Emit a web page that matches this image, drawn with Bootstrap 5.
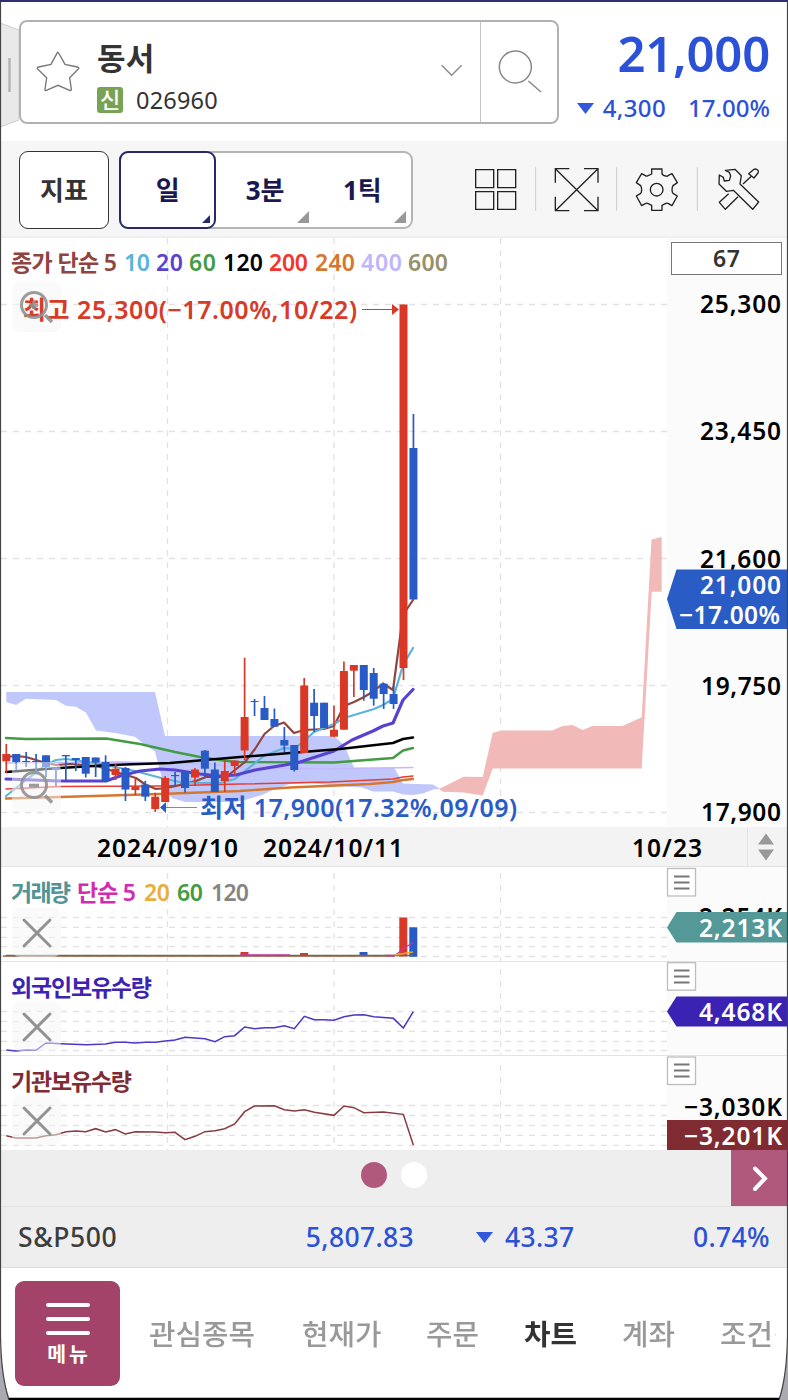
<!DOCTYPE html>
<html lang="ko">
<head>
<meta charset="utf-8">
<meta name="viewport" content="width=device-width, initial-scale=1">
<title>동서 차트</title>
<link href="https://cdn.jsdelivr.net/npm/bootstrap@5.3.0/dist/css/bootstrap.min.css" rel="stylesheet">
<style>
body{font-family:"Noto Sans","Noto Sans CJK KR",sans-serif;background:#fff;color:#333;line-height:1}
svg{display:block;flex:none}
svg text{font-family:"Noto Sans","Noto Sans CJK KR",sans-serif;font-weight:600}
.app{width:788px;height:1400px;border-top:2px solid #30306e;overflow:hidden}
.topbar{height:139px;padding:18px 18px 0 0}
.handle{width:19px;height:106px;margin-top:2px}
.stockbox{width:540px;height:104px;border:2px solid #b2b2b2;border-radius:8px;background:#fff}
.stockname{font-size:31px;font-weight:700;letter-spacing:.2px;line-height:34px}
.tagbox{width:26px;height:26px;border-radius:3px;background:#78a355;color:#fff;font-size:22px;font-weight:500;line-height:25px}
.code{font-size:23.5px;letter-spacing:.2px;line-height:26px;margin-left:13px}
.searchcell{width:77px;border-left:1px solid #c4c4c4}
.blue{color:#2b51d8}
.price{font-size:49px;font-weight:600;line-height:48px;letter-spacing:-.2px;margin-top:9px}
.diff{font-size:24px;font-weight:500;line-height:26px;margin-top:18px}
.toolbar{height:97px;background:#f6f6f6;padding:10px 0 0 19px;border-bottom:2px solid #efefef}
.tbtn{height:78px;border-radius:9px;background:#fff;font-size:26px;font-weight:700;color:#1b1850}
.ind{width:90px;border:1.5px solid #333;color:#333;margin-right:10px}
.period{width:294px;border:2px solid #b5b5b5}
.period .sel{width:99px;margin:-2px 0 -2px -2px;border:2px solid #28286b;border-radius:9px;height:78px}
.period .cell{position:relative;width:98px}
.corner{position:absolute;right:5px;bottom:4px;width:0;height:0;border-left:12px solid transparent;border-bottom:12px solid #999}
.sel .corner{right:4px;bottom:4px;border-left-width:8px;border-bottom:8px solid #28286b}
.pager{height:56px;background:#eee}
.dotp{width:26px;height:26px;border-radius:50%}
.nextb{width:57px;height:56px;background:#b0597c}
.index{height:62px;background:#eee;border-top:1px solid #e3e3e3;border-bottom:1px solid #ddd;font-size:26.5px;font-weight:500;line-height:30px;letter-spacing:.35px}
.menu{width:105px;height:105px;border-radius:9px;background:#a44369;color:#fff;font-size:20.5px;font-weight:700;letter-spacing:3px}
.mline{width:44px;height:4px;border-radius:2px;background:#fff}
.tabs{font-size:28.8px;font-weight:500;color:#999;white-space:nowrap;line-height:34px;-webkit-mask-image:linear-gradient(90deg,#000 650px,transparent 658px)}
.tabs span{flex:none}
.frame{position:absolute;left:0;top:0;pointer-events:none}
</style>
</head>
<body>
<div class="app position-relative">
<header class="topbar d-flex">
  <svg class="handle" viewBox="0 0 19 106"><path d="M0 1L19 8V98L0 105Z" fill="#e9e9e9" stroke="#ccc"/><path d="M9.500 36V70" stroke="#b5b5b5" stroke-width="2.500"/></svg>
  <div class="stockbox d-flex">
    <svg width="76" height="101" viewBox="63 66 228 303"><path d="M174 157Q176 158 195 193L232 201Q239 203 235 207L209 233 214 268Q214 273 209 271L174 256 139 271Q134 273 135 268L140 233 113 207Q109 203 116 201L153 193 172 158Q173 156 174 157Z" fill="none" stroke="#777" stroke-width="4"/></svg>
    <div class="flex-grow-1" style="padding-top:19px">
      <div class="stockname">동서</div>
      <div class="d-flex align-items-center" style="margin-top:12px"><span class="tagbox text-center">신</span><span class="code">026960</span></div>
    </div>
    <svg width="60" height="101" viewBox="97 66 180 303"><path d="M162 196L192 226 222 196" fill="none" stroke="#888" stroke-width="4"/></svg>
    <div class="searchcell"><svg width="76" height="101" viewBox="278 66 228 303"><circle cx="381" cy="201" r="48" fill="none" stroke="#888" stroke-width="4.500"/><path d="M420 243L458 276" stroke="#888" stroke-width="4.500"/></svg></div>
  </div>
  <div class="flex-grow-1 text-end blue">
    <div class="price">21,000</div>
    <div class="diff d-flex justify-content-end align-items-center"><svg width="17" height="11" class="me-auto" style="margin-left:18px"><path d="M0 0H17L8.500 11Z" fill="#3059db"/></svg><span style="letter-spacing:.4px">4,300</span><span style="margin-left:22px">17.00%</span></div>
  </div>
</header>
<div class="toolbar d-flex">
  <div class="tbtn ind d-flex align-items-center justify-content-center">지표</div>
  <div class="tbtn period d-flex">
    <div class="cell sel d-flex align-items-center justify-content-center">일<i class="corner"></i></div>
    <div class="cell d-flex align-items-center justify-content-center">3분<i class="corner"></i></div>
    <div class="cell d-flex align-items-center justify-content-center">1틱<i class="corner"></i></div>
  </div>
  <svg width="375" height="79" viewBox="75 453 1125 237" fill="none" stroke="#222" stroke-width="4">
    <path d="M263 509h54v54h-54zM329 509h54v54h-54zM263 575h54v53h-54zM329 575h54v53h-54z"/>
    <path d="M443 502V632M686 502V632M928 502V632" stroke="#ccc" stroke-width="3"/>
    <path d="M502 506L630 632M630 506L502 632M502 548V506H544M588 506H630V548M630 590V632H588M544 632H502V590"/>
    <path d="M791 507H822V522Q826 527 833 528Q838 530 840 527L852 521 868 548 855 557Q852 562 852 569Q852 576 855 580L868 588 852 617 840 610Q835 608 832 611L822 616V631H791V616L781 611Q777 608 772 611L761 617 745 588 758 580Q761 576 761 569Q761 562 758 557L745 548 761 521 772 527Q777 530 782 526L791 522Z" stroke-linejoin="round"/>
    <circle cx="806" cy="569" r="19"/>
    <path d="M1012 511L1041 508 1060 527 1056 552 1112 606 1094 628 1036 571 1015 574 993 552 994 525 1006 532 1009 543 1024 541 1028 528 1024 517ZM1022 581L994 607 1012 628 1050 590M1065 552L1090 529M1082 521L1098 508Q1104 505 1110 511Q1112 515 1110 519L1098 534Z" stroke-linejoin="round"/>
  </svg>
</div>

<svg width="788" height="589" viewBox="0 238 788 589">
  <rect x="667" y="238" width="121" height="589" fill="#fbfbfb"/>
  <path d="M1 304.500H667M1 431.500H667M1 558.500H667M1 685.500H667M1 812.500H667M167.500 238V827M334 238V827M500.500 238V827" stroke="#e2e2e2" stroke-width="1.300" stroke-dasharray="6 6"/>
  <path d="M6.300 692H155L165 736H334L344 745 354 767.500H394L403 783.500 433 784.500 440 789 433 789.500 423 793.500 413 795 403 794.500 393 791.500H373L362 787.500 340 786 310 783 290 784 275 789 262 795 245 800 235 802H185L172 798 165 790 155 751.500 145 745 135 736.700 115 733 96 730.500 86 712.700 76 706.700 66 705.700 56 700 26 698.700 16 705 6.300 702Z" fill="#c0c8fb"/>
  <path d="M439 789L463.500 776.700 482.700 777 492.700 732.700 501.700 730.500H552L562.500 726 572.500 725 582.500 730 592.500 726H622.500L641.700 717.300 651.500 539.500 661.700 537V591.700H651.700L641.700 768.500H492.700L482.700 795.500 463.500 792.500 443 791.700Z" fill="#f2b9b9"/>
  <g fill="none" stroke-linejoin="round" stroke-linecap="round">
    <path d="M6 763L120 762 210 764 245 768 330 769 413 767.500" stroke="#c3b9fb" stroke-width="1.500"/>
    <path d="M6 798.500L60 797 160 794 240 791 290 787.500 370 784 393 782 403 780 413 779" stroke="#d5772f" stroke-width="2.400"/>
    <path d="M6 789L60 786.500 160 786 240 784 330 782 393 779 403 777 413 776" stroke="#e83b31" stroke-width="1.500"/>
    <path d="M6 738L26 739 106 738.500 140 744 175 752 200 757 220 760 235 762 334 762.500 393 758 403 750.500 413 748" stroke="#439b43" stroke-width="2.400"/>
    <path d="M6 757L16 756 26 757 36 760 46 763 56 765 70 764 86 765 100 767 116 772 126 775 136 778 146 785 156 789 166 788 176 786 186 783 196 781 206 777 226 777 235 770 245 762 255 749 264.500 734 274 726 284 722.500 294 733 304 730 324 729 334 726 344 706 354 702 364 697 374 691 383 683.500 393 690 403 615 413 600" stroke="#91443d" stroke-width="2.200"/>
    <path d="M6 796L30 777 46 765 56 760 66 759 80 761 100 764 120 768 135 771 150 775 165 779 180 782 200 783 220 783 235 779 245 771 264 756 284 748 294 749 304 741 314 732 334 724 344 718 364 712 374 709 383 705 393 699 403 665 413 648" stroke="#5ab3dc" stroke-width="2.200"/>
    <path d="M6 779L60 781 106 781 120 776 140 771 160 769 175 770 200 774 220 776 236 775 255 770 285 765 300 762 334 751 352 740 373 731 383 726 393 723 403 700 413 689.500" stroke="#5a42d0" stroke-width="3.200"/>
    <path d="M6 772L60 768 110 765 170 763 240 757 290 753 340 749 393 743 403 739 413 737.500" stroke="#000" stroke-width="2.500"/>
  </g>
  <g id="candles"></g>
  <g fill="#f5f5f5" fill-opacity=".5"><rect x="12" y="282" width="49" height="50" rx="8"/><rect x="12" y="762" width="49" height="50" rx="8"/></g>
  <g font-size="23">
    <text x="11" y="271" fill="#8f4442" textLength="106">종가 단순 5</text><text x="124" y="271" fill="#5ab3dc" textLength="26">10</text><text x="156" y="271" fill="#5a42d0" textLength="27">20</text><text x="189" y="271" fill="#439b43" textLength="27">60</text><text x="223" y="271" fill="#000" textLength="40">120</text><text x="269" y="271" fill="#f0372d" textLength="39">200</text><text x="315" y="271" fill="#d5772f" textLength="40">240</text><text x="361" y="271" fill="#c0b6fc" textLength="41">400</text><text x="408" y="271" fill="#97906a" textLength="40">600</text>
  </g>
  <text x="23" y="319" font-size="25" fill="#d73a26" textLength="334">최고 25,300(−17.00%,10/22)</text>
  <path d="M362 309.500H393" stroke="#d73a26"/><path d="M392 304L399 309.500 392 315Z" fill="#d73a26"/>
  <text x="200" y="817" font-size="25" fill="#2a5cc6" textLength="317">최저 17,900(17.32%,09/09)</text>
  <path d="M166 807.500H197" stroke="#2a5cc6" opacity=".7"/><path d="M160 807.500L166 802V813Z" fill="#2a5cc6"/>
  <g fill="none" stroke="#929292" stroke-width="3" opacity=".9"><circle cx="34" cy="305" r="12.500"/><path d="M45 315L52 322" stroke-width="3.500"/><path d="M30 305H38M34 301V309" stroke-width="3.500"/><circle cx="34" cy="785" r="12.500"/><path d="M45 795.500L52 802.500" stroke-width="3.500"/><path d="M29 785.500H39" stroke-width="3.500"/></g>
  <rect x="671.500" y="242.500" width="110" height="32" fill="#fff" stroke="#777"/>
  <g font-size="24.500" fill="#000">
    <text x="713" y="267" font-size="23" fill="#333" textLength="27">67</text>
    <text x="700" y="313" textLength="81">25,300</text><text x="700" y="440" textLength="81">23,450</text><text x="700" y="568" textLength="81">21,600</text><text x="701" y="695" textLength="80">19,750</text><text x="701" y="821" textLength="80">17,900</text>
  </g>
  <path d="M667 599L676.500 569.500H788V629H676.500Z" fill="#295cc5"/>
  <g font-size="24.500" fill="#fff"><text x="700" y="594" textLength="81">21,000</text><text x="679" y="624" textLength="101">−17.00%</text></g>
</svg>

<svg width="788" height="40" viewBox="0 827 788 40">
  <rect y="827" width="788" height="40" fill="#f3f3f3"/><path d="M0 866.500H788M747.500 828V866" stroke="#e3e3e3"/>
  <g font-size="24.500" fill="#000"><text x="97" y="857" textLength="141">2024/09/10</text><text x="263" y="857" textLength="140">2024/10/11</text><text x="632" y="857" textLength="70">10/23</text></g>
  <path d="M758 844.500L766 833.500 774 844.500ZM758 849.500H774L766 860.500Z" fill="#999"/>
</svg>

<svg width="788" height="95" viewBox="0 867 788 95">
  <rect x="667" y="867" width="121" height="95" fill="#fbfbfb"/>
  <path d="M1 917.500H667M1 927.300H667M1 937.300H667M1 946.700H667M1 956.500H667M167.500 873V962M334 873V962M500.500 873V962" stroke="#e2e2e2" stroke-width="1.300" stroke-dasharray="6 6"/>
  <path d="M0 961.500H788" stroke="#e3e3e3"/>
  <rect x="399.300" y="917.500" width="8" height="39" fill="#d93826"/><rect x="409.300" y="927.300" width="8" height="29.500" fill="#285bc6"/>
  <path d="M240.500 953.500h8M300 954.500h8" stroke="#d93826" stroke-width="3"/><path d="M359.500 953.500h8" stroke="#285bc6" stroke-width="3"/>
  <path d="M3 956H250L395 956" stroke="#b75b44" stroke-width="1.300" fill="none"/><path d="M6 955.500H413" stroke="#52775a" stroke-width="1.300"/><path d="M240 955H290M385 955.500H395L403 949 413 942.500" stroke="#c933ac" stroke-width="1.300" fill="none"/><path d="M395 955L413 952" stroke="#e3ad35" stroke-width="1.500"/>
  <g font-size="23"><text x="11" y="901" fill="#529495" textLength="60">거래량</text><text x="77" y="901" fill="#d02bb2" textLength="59">단순 5</text><text x="144" y="901" fill="#e8ae37" textLength="26">20</text><text x="177" y="901" fill="#439b43" textLength="26">60</text><text x="211" y="901" fill="#858585" textLength="38">120</text></g>
  <rect x="12" y="908" width="49" height="49" rx="8" fill="#f5f5f5" fill-opacity=".5"/><path d="M24 920L50 946M50 920L24 946" stroke="#929292" stroke-width="3" stroke-linecap="round"/>
  <rect x="667.500" y="868.500" width="28" height="27.500" fill="#fff" stroke="#bdbdbd" stroke-width="1.300"/><path d="M674 876.500H689.500M674 882.500H689.500M674 888.500H689.500" stroke="#777" stroke-width="2"/>
  <text x="699" y="926" font-size="24.500" fill="#000" textLength="83">2,254K</text>
  <path d="M667 927.500L676.500 912H788V942.500H676.500Z" fill="#549898"/><text x="699" y="937" font-size="24.500" fill="#fff" textLength="83">2,213K</text>
</svg>

<svg width="788" height="94" viewBox="0 962 788 94">
  <rect x="667" y="962" width="121" height="94" fill="#fbfbfb"/>
  <path d="M1 1011.500H667M1 1021.300H667M1 1031.300H667M1 1041.300H667M1 1050.500H667M167.500 969V1056M334 969V1056M500.500 969V1056" stroke="#e2e2e2" stroke-width="1.300" stroke-dasharray="6 6"/>
  <path d="M0 1055.500H788" stroke="#e3e3e3"/>
  <path transform="translate(0 990) scale(.33333)" d="M19 180L48 183 78 180 108 181 138 159 200 162 260 164 316 162 346 157 376 157 406 159 436 157 466 157 496 153 525 150 555 142 615 146 645 155 674 140 704 137 734 111 764 116 794 113 823 113 853 107 883 116 913 79 943 89 972 89 1002 91 1032 80 1062 75 1092 74 1121 80 1180 85 1210 114 1240 65" fill="none" stroke="#4e38c4" stroke-width="4.600"/>
  <text x="11" y="996" font-size="23" fill="#3c24b3" textLength="141">외국인보유수량</text>
  <rect x="12" y="1002" width="49" height="49" rx="8" fill="#f5f5f5" fill-opacity=".5"/><path d="M24 1014L50 1040M50 1014L24 1040" stroke="#929292" stroke-width="3" stroke-linecap="round"/>
  <rect x="667.500" y="962.700" width="28" height="27.500" fill="#fff" stroke="#bdbdbd" stroke-width="1.300"/><path d="M674 970.500H689.500M674 976.500H689.500M674 982.500H689.500" stroke="#777" stroke-width="2"/>
  <path d="M667 1011.500L676.500 996.500H788V1026.500H676.500Z" fill="#3a22b2"/><text x="699" y="1021" font-size="24.500" fill="#fff" textLength="83">4,468K</text>
</svg>

<svg width="788" height="94" viewBox="0 1056 788 94">
  <rect x="667" y="1056" width="121" height="94" fill="#fbfbfb"/>
  <path d="M1 1105.500H667M1 1115.500H667M1 1125.500H667M1 1135.300H667M1 1145.300H667M167.500 1065V1150M334 1065V1150M500.500 1065V1150" stroke="#e2e2e2" stroke-width="1.300" stroke-dasharray="6 6"/>
  <path transform="translate(0 990) scale(.33333)" d="M19 437L48 444 108 444 138 437 168 434 198 425 228 423 257 425 287 416 317 426 346 419 376 432 406 425 466 426 496 428 525 427 555 449 585 439 615 425 645 422 674 416 704 402 734 365 763 348 823 347 853 359 883 363 913 359 943 367 1002 376 1032 348 1062 353 1091 368 1150 366 1210 373 1240 465" fill="none" stroke="#893b42" stroke-width="4.600"/>
  <text x="11" y="1090" font-size="23" fill="#802c34" textLength="121">기관보유수량</text>
  <rect x="12" y="1096" width="49" height="49" rx="8" fill="#f5f5f5" fill-opacity=".5"/><path d="M24 1108L50 1134M50 1108L24 1134" stroke="#929292" stroke-width="3" stroke-linecap="round"/>
  <rect x="667.500" y="1057" width="28" height="27.500" fill="#fff" stroke="#bdbdbd" stroke-width="1.300"/><path d="M674 1064.500H689.500M674 1070.500H689.500M674 1076.500H689.500" stroke="#777" stroke-width="2"/>
  <text x="684" y="1116" font-size="24.500" fill="#000" textLength="98">−3,030K</text>
  <rect x="667" y="1120" width="121" height="30" fill="#802a31"/><text x="684" y="1145" font-size="24.500" fill="#fff" textLength="98">−3,201K</text>
</svg>

<div class="pager d-flex">
  <div class="flex-grow-1 d-flex" style="padding:12px 0 0 361px;gap:14px"><span class="dotp" style="background:#b0597c"></span><span class="dotp bg-white"></span></div>
  <div class="nextb"><svg width="57" height="56"><path d="M24 18.500L34 28.500 24 39" fill="none" stroke="#fff" stroke-width="4" stroke-linecap="round"/></svg></div>
</div>
<div class="index d-flex align-items-center blue">
  <span style="width:196px;padding-left:18px;color:#3d3d3d;letter-spacing:.6px">S&amp;P500</span>
  <span class="text-end" style="width:218px">5,807.83</span>
  <svg width="17" height="11" style="margin-left:62px"><path d="M0 0H17L8.500 11Z" fill="#3059db"/></svg>
  <span style="margin-left:12px">43.37</span>
  <span class="ms-auto" style="padding-right:18px">0.74%</span>
</div>
<nav class="d-flex" style="padding:13px 0 0 15px">
  <div class="menu d-flex flex-column align-items-center" style="padding-top:22px"><div class="d-flex flex-column" style="gap:10px"><div class="mline"></div><div class="mline"></div><div class="mline"></div></div><div style="margin-top:9px;padding-left:3px">메뉴</div></div>
  <div class="tabs d-flex overflow-hidden" style="width:656px;padding:36px 0 0 29px">
    <span style="width:153px">관심종목</span><span style="width:124px">현재가</span><span style="width:98px">주문</span><span class="fw-bold" style="width:98px;color:#333">차트</span><span style="width:98px">계좌</span><span>조건검색</span>
  </div>
</nav>
<svg class="frame" width="788" height="1398" viewBox="0 2 788 1398">
  <path d="M0 1335Q1 1376 10 1400H0ZM788 1335Q787 1376 778 1400H788Z" fill="#aaaab0"/>
  <path d="M.5 2V1335Q1 1376 9 1400M787.500 2V1335Q787 1376 779 1400" fill="none" stroke="#444" stroke-width="1.200"/>
  <path d="M9 1399H779" stroke="#000" stroke-width="2.500"/>
</svg>
</div>
<script src="https://cdn.jsdelivr.net/npm/bootstrap@5.3.0/dist/js/bootstrap.bundle.min.js"></script>
<script>
// Each candle: direction, high, body top, body bottom, low
const data=[['r',744,754,761.3,773],['b',754,754,762,770],['b',752,761,762,767],['b',754,761,762,772],['b',755.3,755.3,767,777],['b',767,767.5,770,786],['b',755,755,756.3,780],['b',758,758,760,771],['b',757,757,773.7,777.5],['b',757.5,757.5,762.5,777],['b',755.3,762,781.3,781.3],['r',764,768.7,775,780],['b',767,768,789.5,801],['r',777,786.7,790,795],['b',781,784.5,796.7,801],['r',792.7,796.7,809,812],['r',776,778,802,802],['b',772,775,776.2,786.5],['b',771.5,771.5,788,792.5],['r',768,769.5,777.5,786],['b',750,750.7,768.7,777],['b',762.5,769.5,792,792],['r',760.5,771,781,792],['r',760.5,760.5,766,776],['r',657.7,717,750.5,760],['b',699,701,702,716],['b',696,708,720,720],['b',708.5,719,726.7,726.7],['b',727,740,745.5,752.5],['b',745,745,770,771.5],['r',678,685.5,753,753],['b',689,702.7,716,732],['b',702.7,702.7,728,728],['r',705.5,729.7,736.7,736.7],['r',661.5,671,729.7,729.7],['r',665,665,670.7,697],['b',665,665,690,700.7],['b',668,673,698.7,705.7],['b',683.7,683.7,694,709],['b',686,694,704,709],['r',304.5,304.5,668,680],['b',414,448,599.5,599.5]];
document.getElementById('candles').innerHTML=data.map(([k,h,t,b,l],i)=>{
  const x=6.3+i*9.93,c=k==='r'?'#d93826':'#285bc6';
  return `<path d="M${x} ${h}V${l}" stroke="${c}" stroke-width="1.7"/><rect x="${x-4}" y="${t}" width="8" height="${b-t}" fill="${c}"/>`;
}).join('');
</script>
</body>
</html>
